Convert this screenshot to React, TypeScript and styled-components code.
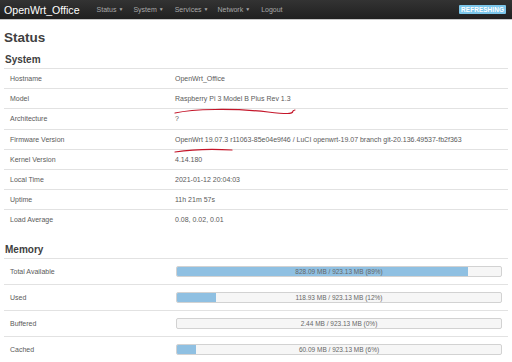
import styled, { createGlobalStyle } from "styled-components";

const GlobalStyle = createGlobalStyle`
  body {
    margin: 0;
    background: #fff;
    font-family: "Liberation Sans", Arial, sans-serif;
    color: #404040;
  }
`;

const Header = styled.header`
  display: flex;
  align-items: center;
  height: 19px;
  padding: 0 4px;
  background: linear-gradient(#333, #202020);
  border-bottom: 1px solid #c8c8c8;
`;

const Brand = styled.a`
  font-size: 10.6px;
  color: #fff;
  margin-right: 17px;
  text-decoration: none;
`;

const NavItem = styled.span<{ $gap: number }>`
  font-size: 7px;
  color: #a8a8a8;
  margin-right: ${(p) => p.$gap}px;
  white-space: nowrap;
`;

const Caret = styled.span`
  font-size: 5px;
  margin-left: 2px;
  vertical-align: 1px;
`;

const Badge = styled.span`
  margin-left: auto;
  margin-right: 2px;
  padding: 1px 2px;
  background: #7cc6ea;
  color: #fff;
  font-size: 6.4px;
  font-weight: bold;
  letter-spacing: 0.1px;
  border-radius: 1px;
`;

const Main = styled.main`
  padding: 0 4px;
`;

const Title = styled.h1`
  margin: 0;
  padding-top: 10px;
  height: 22px;
  font-size: 13.5px;
  font-weight: bold;
  color: #404040;
`;

const Section = styled.h2`
  margin: 0;
  height: 16px;
  line-height: 16px;
  font-size: 10px;
  font-weight: bold;
  color: #404040;
  padding-left: 1px;
`;

const Table = styled.div<{ $after: number }>`
  display: flex;
  flex-direction: column;
  margin-bottom: ${(p) => p.$after}px;
`;

const Row = styled.div<{ $h: number }>`
  display: grid;
  grid-template-columns: 171px 1fr;
  align-items: center;
  height: ${(p) => p.$h}px;
  border-top: 1px solid #e2e2e2;
  font-size: 7px;
  color: #5a5a5a;
`;

const Label = styled.div`
  padding-left: 6px;
`;

const Value = styled.div`
  position: relative;
  white-space: nowrap;
`;

const Scribble = styled.svg`
  position: absolute;
  left: -2px;
  top: 11px;
  overflow: visible;
`;

const Bar = styled.div`
  position: relative;
  width: 324px;
  height: 9px;
  margin-left: 1px;
  border: 1px solid #d2d2d2;
  border-radius: 2px;
  background: #f6f6f6;
  overflow: hidden;
`;

const Fill = styled.div`
  height: 100%;
  background: #8fc0e2;
`;

const BarText = styled.div`
  position: absolute;
  inset: 0;
  text-align: center;
  font-size: 6.5px;
  line-height: 9px;
  color: #666;
`;

const system: [string, string][] = [
  ["Hostname", "OpenWrt_Office"],
  ["Model", "Raspberry Pi 3 Model B Plus Rev 1.3"],
  ["Architecture", "?"],
  [
    "Firmware Version",
    "OpenWrt 19.07.3 r11063-85e04e9f46 / LuCI openwrt-19.07 branch git-20.136.49537-fb2f363",
  ],
  ["Kernel Version", "4.14.180"],
  ["Local Time", "2021-01-12 20:04:03"],
  ["Uptime", "11h 21m 57s"],
  ["Load Average", "0.08, 0.02, 0.01"],
];

const memory: [string, string, number][] = [
  ["Total Available", "828.09 MB / 923.13 MB (89%)", 89.7],
  ["Used", "118.93 MB / 923.13 MB (12%)", 12],
  ["Buffered", "2.44 MB / 923.13 MB (0%)", 0],
  ["Cached", "60.09 MB / 923.13 MB (6%)", 6],
];

// red hand-drawn underlines from the original screenshot
const marks: Record<string, { w: number; d: string }> = {
  Model: { w: 124, d: "M2 7 C 20 3, 60 2, 95 6 S 115 5, 122 4" },
  "Firmware Version": { w: 62, d: "M2 5 Q 28 1, 59 3" },
};

const nav: [string, number][] = [
  ["Status", 10],
  ["System", 11],
  ["Services", 9],
  ["Network", 11],
];

export default function App() {
  return (
    <>
      <GlobalStyle />
      <Header>
        <Brand>OpenWrt_Office</Brand>
        {nav.map(([n, g]) => (
          <NavItem key={n} $gap={g}>
            {n}
            <Caret>▼</Caret>
          </NavItem>
        ))}
        <NavItem $gap={0}>Logout</NavItem>
        <Badge>REFRESHING</Badge>
      </Header>
      <Main>
        <Title>Status</Title>
        <Section>System</Section>
        <Table $after={12}>
          {system.map(([k, v]) => (
            <Row key={k} $h={19.2}>
              <Label>{k}</Label>
              <Value>
                {v}
                {marks[k] && (
                  <Scribble width={marks[k].w} height={8}>
                    <path d={marks[k].d} fill="none" stroke="#c4162a" strokeWidth="1.2" strokeLinecap="round" />
                  </Scribble>
                )}
              </Value>
            </Row>
          ))}
        </Table>
        <Section>Memory</Section>
        <Table $after={0}>
          {memory.map(([k, v, pct]) => (
            <Row key={k} $h={25}>
              <Label>{k}</Label>
              <Bar>
                <Fill style={{ width: `${pct}%` }} />
                <BarText>{v}</BarText>
              </Bar>
            </Row>
          ))}
        </Table>
      </Main>
    </>
  );
}
